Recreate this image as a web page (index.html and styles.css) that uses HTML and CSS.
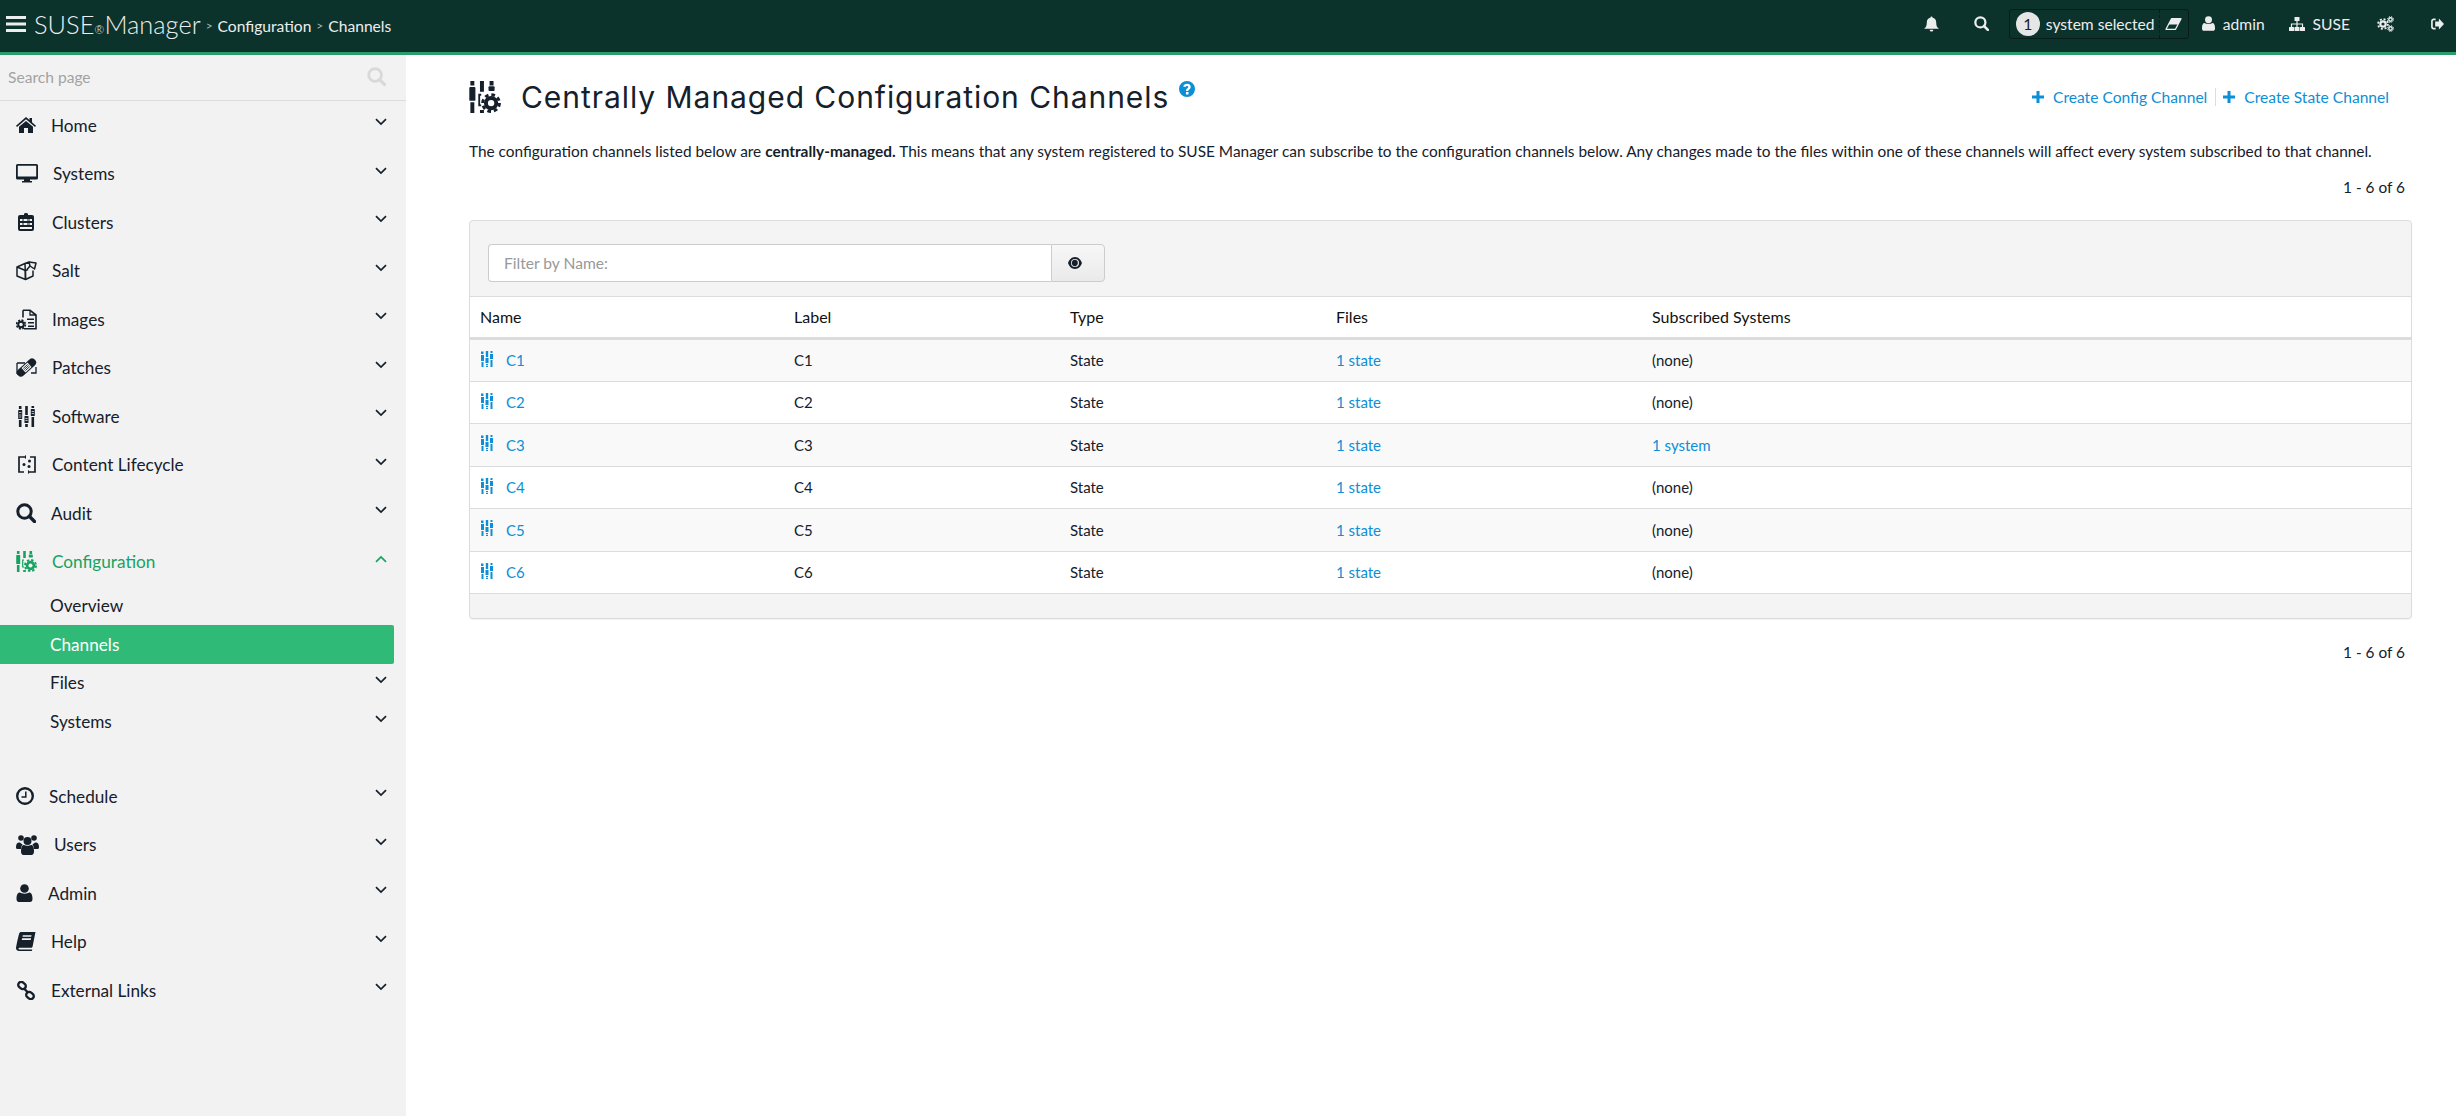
FILE: index.html
```html
<!DOCTYPE html>
<html lang="en">
<head>
    <meta charset="UTF-8">
    <title>Centrally Managed Configuration Channels</title>
    <link rel="stylesheet" href="styles.css">
</head>
<body>
    <!-- Icon sprites -->
    <svg class="sprites" xmlns="http://www.w3.org/2000/svg">
        <symbol id="i-bars" viewBox="0 0 20 16"><rect y="0" width="20" height="3"/><rect y="6.5" width="20" height="3"/><rect y="13" width="20" height="3"/></symbol>
        <symbol id="i-home" viewBox="0 0 20 16"><path d="M10 0 13.5 3V1H16V5.2L20 8.7 19 9.9 10 2.3 1 9.9 0 8.7Z"/><path d="M10 3.9 17 9.8V16H12V11H8V16H3V9.8Z"/></symbol>
        <symbol id="i-desktop" viewBox="0 0 22 19"><path d="M1.5 0H20.5A1.5 1.5 0 0 1 22 1.5V14A1.5 1.5 0 0 1 20.5 15.5H14V17H16V18.500H6V17H8V15.500H1.500A1.500 1.500 0 0 1 0 14V1.500A1.500 1.500 0 0 1 1.500 0ZM1.800 1.800V12.500H20.200V1.800Z" fill-rule="evenodd"/></symbol>
        <symbol id="i-clusters" viewBox="0 0 16 18"><path d="M2 2H6V1A2 1 0 0 1 10 1V2H14A2 2 0 0 1 16 4V16A2 2 0 0 1 14 18H2A2 2 0 0 1 0 16V4A2 2 0 0 1 2 2ZM2 6V8H14V6ZM2 10V12H14V10ZM2 14V16H14V14Z" fill-rule="evenodd"/><rect x="4" y="6.500" width="2" height="1"/><rect x="9" y="6.500" width="3" height="1"/><rect x="4" y="10.500" width="2" height="1"/><rect x="9" y="10.500" width="3" height="1"/></symbol>
        <symbol id="i-salt" viewBox="0 0 21 20"><g fill="none" stroke="currentColor" stroke-width="1.500" stroke-linejoin="round"><path d="M1 6.500 9 3V3L9.500 19 1 15.500Z"/><path d="M9.500 19 17 15.500V10"/><path d="M1 6.500 9.500 10"/><path d="M9.500 10V19"/><path d="M9.500 10 12 9"/><path d="M9 3 13 1.500 14 5.500 11 9"/><path d="M13 1.500 20 2.500 18.500 8.500 14 5.500"/></g></symbol>
        <symbol id="i-images" viewBox="0 0 21 20"><path d="M7 .8H14L20 5.500V19.200H8" fill="none" stroke="currentColor" stroke-width="1.600"/><path d="M7 .8V8" fill="none" stroke="currentColor" stroke-width="1.600"/><path d="M14 .8V5.500H20" fill="none" stroke="currentColor" stroke-width="1.300"/><rect x="11" y="9" width="7" height="1.500"/><rect x="12" y="12.500" width="6" height="1.500"/><rect x="12" y="16" width="6" height="1.500"/><circle cx="5" cy="15" r="2.800" fill="none" stroke="currentColor" stroke-width="2"/><circle cx="5" cy="15" r="4.400" fill="none" stroke="currentColor" stroke-width="1.600" stroke-dasharray="2 1.450"/></symbol>
        <symbol id="i-patches" viewBox="0 0 21 21"><path d="M1 6H9M1 6V17M1 17H4M15 16H20V10" fill="none" stroke="currentColor" stroke-width="1.300"/><g transform="rotate(-42 10.500 10.500)"><rect x="-1" y="6.500" width="23" height="8" rx="4"/><rect x="6.500" y="7.500" width="8" height="6" fill="#f2f2f2"/><path d="M7.500 9H13.500M7.500 10.500H13.500M7.500 12H13.500" stroke="currentColor" stroke-width=".8"/></g></symbol>
        <symbol id="i-sliders" viewBox="0 0 17 21"><path d="M2.200 0V3M2.200 14V21M8.500 0V9M8.500 18V21M14.800 0V2M14.800 11V21" fill="none" stroke="currentColor" stroke-width="2.600"/><rect x=".2" y="4" width="4" height="9" rx=".6"/><rect x="6.500" y="10" width="4" height="7" rx=".6"/><rect x="12.800" y="3" width="4" height="7" rx=".6"/><path d="M1 6.500H3.500M1 9H3.500M1 11H3.500M7.300 12.500H9.700M7.300 14.500H9.700M13.600 5.500H16M13.600 7.500H16" stroke="#f2f2f2" stroke-width=".7"/></symbol>
        <symbol id="i-sliders-sm" viewBox="0 0 12 16"><path d="M0 0.500H2.500V3H0ZM0 4H3V10H0ZM0.500 11H2.500V16H0.500ZM4.800 0H7.200V6H4.800ZM4.500 7H7.500V12H4.500ZM5 13H7V14.200H5ZM5 15H7V16H5ZM9.500 0H11.500V2H9.500ZM9 3H12V8H9ZM9.500 9H11.500V16H9.500Z"/></symbol>
        <symbol id="i-lifecycle" viewBox="0 0 18 19"><path d="M6 2H1V17H6M12 17H17V2H12" fill="none" stroke="currentColor" stroke-width="1.700"/><path d="M8 0V4L5.500 2ZM10 15V19L12.500 17Z"/><circle cx="11.500" cy="6" r="1.500"/><circle cx="6" cy="9.500" r="1.500"/><circle cx="11" cy="11.500" r="1.500"/></symbol>
        <symbol id="i-search" viewBox="0 0 20 20"><circle cx="8.500" cy="8.500" r="6.700" fill="none" stroke="currentColor" stroke-width="3"/><path d="M13.300 13.300 18.500 18.500" stroke="currentColor" stroke-width="3.400" stroke-linecap="round"/></symbol>
        <symbol id="i-config" viewBox="0 0 21 21"><path d="M2.200 0V3M2.200 14V21M8.500 0V7M8.500 19V21M14.800 0V3" fill="none" stroke="currentColor" stroke-width="2.600"/><rect x=".2" y="4" width="4" height="9" rx=".6"/><rect x="12.800" y="3.500" width="4" height="3" rx=".6"/><path d="M8 9H6.700V16H8" fill="none" stroke="currentColor" stroke-width="1.200"/><circle cx="14.500" cy="14.500" r="3.400" fill="none" stroke="currentColor" stroke-width="2.600"/><circle cx="14.500" cy="14.500" r="5.500" fill="none" stroke="currentColor" stroke-width="1.900" stroke-dasharray="2.400 1.920"/></symbol>
        <symbol id="i-clock" viewBox="0 0 18 18"><circle cx="9" cy="9" r="7.800" fill="none" stroke="currentColor" stroke-width="2.400"/><path d="M9.800 4.500V10H5.500" fill="none" stroke="currentColor" stroke-width="1.500"/></symbol>
        <symbol id="i-users" viewBox="0 0 23 20"><circle cx="5" cy="3" r="2.800"/><circle cx="18" cy="3" r="2.800"/><circle cx="11.500" cy="6" r="4"/><path d="M0 12C0 8 2 7 4 7.500 5 8.500 6 9 6.500 9 6 10.500 5 12 5 14H1.500A1.500 1.500 0 0 1 0 12.500ZM23 12C23 8 21 7 19 7.500 18 8.500 17 9 16.500 9 17 10.500 18 12 18 14H21.500A1.500 1.500 0 0 0 23 12.500Z"/><path d="M8 10C9.500 11 13.500 11 15 10 17 10 18 12 18 16.500 18 18.500 17 20 15.500 20H7.500C6 20 5 18.500 5 16.500 5 12 6 10 8 10Z"/></symbol>
        <symbol id="i-user" viewBox="0 0 16 18"><circle cx="8" cy="4.500" r="4.300"/><path d="M3.500 8.500C5 10 11 10 12.500 8.500 15 8.500 16 11 16 15 16 17 15 18 13.500 18H2.500C1 18 0 17 0 15 0 11 1 8.500 3.500 8.500Z"/></symbol>
        <symbol id="i-book" viewBox="0 0 19 18"><path d="M5 0H18.500L15.800 13.500C15.600 14.500 15 15 14 15H4C3 15 2.300 15.500 2.300 16 2.300 16.400 2.700 16.500 3.500 16.500H15.500L15 18H3C1 18 0 16.800 0 15.500 0 14.500 2 5 3 1.500 3.300.5 4 0 5 0ZM6.500 3 6.200 4.500H14.500L14.800 3ZM5.800 6 5.500 7.500H14L14.300 6Z" fill-rule="evenodd"/></symbol>
        <symbol id="i-link" viewBox="0 0 19 19"><g fill="none" stroke="currentColor" stroke-width="2.400"><rect x="1.500" y="1.500" width="8" height="6" rx="3" transform="rotate(40 5.500 4.500)"/><rect x="9.500" y="11.500" width="8" height="6" rx="3" transform="rotate(40 13.500 14.500)"/><path d="M7.500 7.500 11.500 11.500"/></g></symbol>
        <symbol id="i-bell" viewBox="0 0 16 16"><path d="M8 0A1.300 1.300 0 0 1 9.200 1.200C11.500 1.700 13 3.500 13 6 13 10 14 11.500 16 13H0C2 11.500 3 10 3 6 3 3.500 4.500 1.700 6.800 1.200A1.300 1.300 0 0 1 8 0ZM6 14H10A2 2 0 0 1 6 14Z"/></symbol>
        <symbol id="i-eraser" viewBox="0 0 17 12"><path d="M6.500.7H16L10.500 11.300H1Z" fill="none" stroke="currentColor" stroke-width="1.300" stroke-linejoin="round"/><path d="M6.500.7H16L13 6.500H3.500Z"/></symbol>
        <symbol id="i-sitemap" viewBox="0 0 16 14"><rect x="5.500" y="0" width="5" height="4" rx=".5"/><rect x="0" y="10" width="5" height="4" rx=".5"/><rect x="5.500" y="10" width="5" height="4" rx=".5"/><rect x="11" y="10" width="5" height="4" rx=".5"/><path d="M8 4V10M2.500 10V7H13.500V10" fill="none" stroke="currentColor" stroke-width="1.200"/></symbol>
        <symbol id="i-cogs" viewBox="0 0 17 16"><circle cx="6" cy="8" r="2.700" fill="none" stroke="currentColor" stroke-width="2.200"/><circle cx="6" cy="8" r="4.900" fill="none" stroke="currentColor" stroke-width="1.800" stroke-dasharray="2 1.850"/><circle cx="13.500" cy="3.500" r="1.700" fill="none" stroke="currentColor" stroke-width="1.400"/><circle cx="13.500" cy="12.500" r="1.700" fill="none" stroke="currentColor" stroke-width="1.400"/><circle cx="13.500" cy="3.500" r="2.900" fill="none" stroke="currentColor" stroke-width="1" stroke-dasharray="1.300 1"/><circle cx="13.500" cy="12.500" r="2.900" fill="none" stroke="currentColor" stroke-width="1" stroke-dasharray="1.300 1"/></symbol>
        <symbol id="i-signout" viewBox="0 0 14 12"><path d="M5 1H3A2 2 0 0 0 1 3V9A2 2 0 0 0 3 11H5" fill="none" stroke="currentColor" stroke-width="1.800"/><path d="M8.500 0 14 6 8.500 12V8.700H4.500V3.300H8.500Z"/></symbol>
        <symbol id="i-plus" viewBox="0 0 12 12"><path d="M4.500 0H7.500V4.500H12V7.500H7.500V12H4.500V7.500H0V4.500H4.500Z"/></symbol>
        <symbol id="i-eye" viewBox="0 0 14 12"><path d="M7 0C10.500 0 13 3 14 6 13 9 10.500 12 7 12S1 9 0 6C1 3 3.500 0 7 0ZM7 2A4 4 0 1 0 7 10 4 4 0 0 0 7 2Z" fill-rule="evenodd"/><path d="M5 3.200C6 2.500 8 2.500 9 3.500 10.500 5 10 8 8 9 6 9.800 4 8.500 3.800 6.500 3.800 5 4 4 5 3.200Z"/></symbol>
        <symbol id="i-help" viewBox="0 0 16 16"><path d="M8 0A8 8 0 1 1 8 16 8 8 0 0 1 8 0ZM7 11V13.500H9.500V11ZM8 2.800C6 2.800 4.700 3.800 4.300 5.600L6.500 6.100C6.700 5.300 7.200 4.900 8 4.900 8.800 4.900 9.300 5.300 9.300 6 9.300 6.600 8.900 7 8.200 7.500 7.300 8.200 7 8.800 7 10H9.300C9.300 9.300 9.500 9 10.200 8.500 11.100 7.800 11.700 7.100 11.700 5.900 11.700 4 10.200 2.800 8 2.800Z" fill-rule="evenodd"/></symbol>
        <symbol id="i-down" viewBox="0 0 12 8"><path d="M1 1.200 6 6 11 1.200" fill="none" stroke="currentColor" stroke-width="1.700"/></symbol>
        <symbol id="i-up" viewBox="0 0 12 8"><path d="M1 6.800 6 2 11 6.800" fill="none" stroke="currentColor" stroke-width="1.700"/></symbol>
    </svg>

    <!-- Top bar -->
    <header class="topbar">
        <div class="brand">
            <svg class="icon bars"><use href="#i-bars"/></svg>
            <span class="logo">SUSE<small>®</small>Manager</span>
            <span class="crumb-sep">&gt;</span><span class="crumb">Configuration</span>
            <span class="crumb-sep">&gt;</span><span class="crumb">Channels</span>
        </div>
        <div class="top-tools">
            <svg class="icon t-bell"><use href="#i-bell"/></svg>
            <svg class="icon t-search"><use href="#i-search"/></svg>
            <div class="ssm">
                <span class="ssm-count">1</span>
                <span class="ssm-text">system selected</span>
                <span class="ssm-clear"><svg class="icon t-eraser"><use href="#i-eraser"/></svg></span>
            </div>
            <span class="top-item user-item"><svg class="icon t-user"><use href="#i-user"/></svg>admin</span>
            <span class="top-item org-item"><svg class="icon t-sitemap"><use href="#i-sitemap"/></svg>SUSE</span>
            <svg class="icon t-cogs"><use href="#i-cogs"/></svg>
            <svg class="icon t-signout"><use href="#i-signout"/></svg>
        </div>
    </header>

    <div class="layout">
        <!-- Sidebar -->
        <aside class="sidebar">
            <div class="side-search">
                <span>Search page</span>
                <svg class="icon s-search"><use href="#i-search"/></svg>
            </div>
            <nav>
                <a class="nav-item"><svg class="icon n-home"><use href="#i-home"/></svg><span>Home</span><svg class="icon chev"><use href="#i-down"/></svg></a>
                <a class="nav-item"><svg class="icon n-desktop"><use href="#i-desktop"/></svg><span>Systems</span><svg class="icon chev"><use href="#i-down"/></svg></a>
                <a class="nav-item"><svg class="icon n-clusters"><use href="#i-clusters"/></svg><span>Clusters</span><svg class="icon chev"><use href="#i-down"/></svg></a>
                <a class="nav-item"><svg class="icon n-wide"><use href="#i-salt"/></svg><span>Salt</span><svg class="icon chev"><use href="#i-down"/></svg></a>
                <a class="nav-item"><svg class="icon n-wide"><use href="#i-images"/></svg><span>Images</span><svg class="icon chev"><use href="#i-down"/></svg></a>
                <a class="nav-item"><svg class="icon n-wide"><use href="#i-patches"/></svg><span>Patches</span><svg class="icon chev"><use href="#i-down"/></svg></a>
                <a class="nav-item"><svg class="icon n-sliders"><use href="#i-sliders"/></svg><span>Software</span><svg class="icon chev"><use href="#i-down"/></svg></a>
                <a class="nav-item"><svg class="icon n-lifecycle"><use href="#i-lifecycle"/></svg><span>Content Lifecycle</span><svg class="icon chev"><use href="#i-down"/></svg></a>
                <a class="nav-item"><svg class="icon n-audit"><use href="#i-search"/></svg><span>Audit</span><svg class="icon chev"><use href="#i-down"/></svg></a>
                <a class="nav-item open"><svg class="icon n-wide"><use href="#i-config"/></svg><span>Configuration</span><svg class="icon chev"><use href="#i-up"/></svg></a>
                <a class="sub-item">Overview</a>
                <a class="sub-item active">Channels</a>
                <a class="sub-item">Files<svg class="icon chev"><use href="#i-down"/></svg></a>
                <a class="sub-item">Systems<svg class="icon chev"><use href="#i-down"/></svg></a>
                <div class="nav-gap"></div>
                <a class="nav-item"><svg class="icon n-clock"><use href="#i-clock"/></svg><span>Schedule</span><svg class="icon chev"><use href="#i-down"/></svg></a>
                <a class="nav-item"><svg class="icon n-users"><use href="#i-users"/></svg><span>Users</span><svg class="icon chev"><use href="#i-down"/></svg></a>
                <a class="nav-item"><svg class="icon n-user"><use href="#i-user"/></svg><span>Admin</span><svg class="icon chev"><use href="#i-down"/></svg></a>
                <a class="nav-item"><svg class="icon n-book"><use href="#i-book"/></svg><span>Help</span><svg class="icon chev"><use href="#i-down"/></svg></a>
                <a class="nav-item"><svg class="icon n-book"><use href="#i-link"/></svg><span>External Links</span><svg class="icon chev"><use href="#i-down"/></svg></a>
            </nav>
        </aside>

        <!-- Main content -->
        <main class="content">
            <div class="title-row">
                <svg class="icon title-icon"><use href="#i-config"/></svg>
                <h1>Centrally Managed Configuration Channels</h1>
                <svg class="icon help-icon"><use href="#i-help"/></svg>
                <div class="actions">
                    <a class="action"><svg class="icon plus"><use href="#i-plus"/></svg>Create Config Channel</a>
                    <a class="action second"><svg class="icon plus"><use href="#i-plus"/></svg>Create State Channel</a>
                </div>
            </div>

            <p class="intro">The configuration channels listed below are <b>centrally-managed.</b> This means that any system registered to SUSE Manager can subscribe to the configuration channels below. Any changes made to the files within one of these channels will affect every system subscribed to that channel.</p>
            <div class="pager first">1 - 6 of 6</div>

            <div class="panel">
                <div class="panel-head">
                    <div class="filter">
                        <div class="filter-input">Filter by Name:</div>
                        <div class="filter-btn"><svg class="icon eye"><use href="#i-eye"/></svg></div>
                    </div>
                </div>
                <table>
                    <colgroup><col class="c-name"><col class="c-label"><col class="c-type"><col class="c-files"><col></colgroup>
                    <thead>
                        <tr><th>Name</th><th>Label</th><th>Type</th><th>Files</th><th>Subscribed Systems</th></tr>
                    </thead>
                    <tbody>
                        <tr><td><a class="row-link"><svg class="icon row-icon"><use href="#i-sliders-sm"/></svg>C1</a></td><td>C1</td><td>State</td><td><a>1 state</a></td><td>(none)</td></tr>
                        <tr><td><a class="row-link"><svg class="icon row-icon"><use href="#i-sliders-sm"/></svg>C2</a></td><td>C2</td><td>State</td><td><a>1 state</a></td><td>(none)</td></tr>
                        <tr><td><a class="row-link"><svg class="icon row-icon"><use href="#i-sliders-sm"/></svg>C3</a></td><td>C3</td><td>State</td><td><a>1 state</a></td><td><a>1 system</a></td></tr>
                        <tr><td><a class="row-link"><svg class="icon row-icon"><use href="#i-sliders-sm"/></svg>C4</a></td><td>C4</td><td>State</td><td><a>1 state</a></td><td>(none)</td></tr>
                        <tr><td><a class="row-link"><svg class="icon row-icon"><use href="#i-sliders-sm"/></svg>C5</a></td><td>C5</td><td>State</td><td><a>1 state</a></td><td>(none)</td></tr>
                        <tr><td><a class="row-link"><svg class="icon row-icon"><use href="#i-sliders-sm"/></svg>C6</a></td><td>C6</td><td>State</td><td><a>1 state</a></td><td>(none)</td></tr>
                    </tbody>
                </table>
                <div class="panel-foot"></div>
            </div>
            <div class="pager last">1 - 6 of 6</div>
        </main>
    </div>
</body>
</html>
```

FILE: styles.css
```css
/* General */
* {
    box-sizing: border-box;
}

body {
    margin: 0;
    height: 100vh;
    overflow: hidden;
    display: flex;
    flex-direction: column;
    font-family: 'Lato', sans-serif;
    font-size: 15.4px;
    color: #15202b;
    background: #fff;
}

a {
    color: #0c8fd6;
}

.sprites {
    display: none;
}

.icon {
    display: block;
    flex: none;
    fill: currentColor;
}

/* Top bar */
.topbar {
    height: 55px;
    flex: none;
    display: flex;
    justify-content: space-between;
    padding-bottom: 5px;
    background: #0c322c;
    border-bottom: 3px solid #2a9d6b;
    color: #eceeee;
}

.brand {
    display: flex;
    align-items: center;
    padding-left: 6px;
}

.bars {
    width: 20px;
    height: 16px;
    margin-right: 8px;
}

.logo {
    font-size: 25.4px;
    font-weight: 300;
    margin-right: 5px;
}

.logo small {
    font-size: 12px;
}

.crumb {
    font-size: 15.6px;
    margin-top: 4px;
}

.crumb-sep {
    font-size: 12px;
    color: #a9b8b4;
    margin: 4px 5px 0 0;
}

.crumb + .crumb-sep {
    margin-left: 5px;
}

.top-tools {
    display: flex;
    align-items: center;
    font-size: 15.6px;
}

.t-bell {
    width: 15px;
    height: 16px;
    margin-right: 35px;
}

.t-search {
    width: 15px;
    height: 15px;
    margin-right: 20px;
}

.ssm {
    width: 180px;
    height: 30px;
    display: flex;
    align-items: center;
    border: 1px solid #081c19;
    border-radius: 3px;
    padding-left: 6px;
}

.ssm-count {
    width: 24px;
    height: 24px;
    border-radius: 50%;
    background: #e6e6e6;
    color: #15202b;
    text-align: center;
    line-height: 24px;
    margin-right: 6px;
}

.ssm-text {
    width: 113px;
    white-space: nowrap;
}

.ssm-clear {
    height: 100%;
    flex: 1;
    display: flex;
    align-items: center;
    justify-content: center;
    border-left: 1px dashed #081c19;
}

.t-eraser {
    width: 17px;
    height: 12px;
}

.top-item {
    display: flex;
    align-items: center;
}

.user-item {
    margin-left: 13px;
}

.t-user {
    width: 13px;
    height: 15px;
    margin-right: 8px;
}

.org-item {
    margin-left: 24px;
}

.t-sitemap {
    width: 16px;
    height: 14px;
    margin-right: 8px;
}

.t-cogs {
    width: 17px;
    height: 16px;
    margin: 0 37px 0 27px;
}

.t-signout {
    width: 13px;
    height: 12px;
    margin-right: 12px;
}

/* Sidebar */
.layout {
    flex: 1;
    display: flex;
    min-height: 0;
}

.sidebar {
    width: 406px;
    flex: none;
    background: #f2f2f2;
}

.side-search {
    height: 46px;
    display: flex;
    align-items: center;
    justify-content: space-between;
    padding: 0 20px 2px 8px;
    border-bottom: 1px solid #dcdcdc;
    color: #a3a3a3;
    font-size: 15.6px;
}

.s-search {
    width: 19px;
    height: 19px;
    color: #d9d9d9;
}

.nav-item,
.sub-item {
    display: flex;
    align-items: center;
    color: #15202b;
    font-size: 17.2px;
    width: 394px;
}

.nav-item {
    height: 48.5px;
    padding: 0 7px 0 16px;
}

.nav-item .icon:first-child {
    margin-right: 15px;
}

.nav-item.open {
    color: #16a35f;
}

.sub-item {
    height: 38.8px;
    padding: 0 7px 0 50px;
}

.sub-item.active {
    background: #30ba78;
    color: #fff;
    border-radius: 0 2px 2px 0;
}

.nav-gap {
    height: 31px;
}

.chev {
    width: 12px;
    height: 8px;
    margin: -6px 0 0 auto;
}

.n-home { width: 20px; height: 16px; }
.n-desktop { width: 22px; height: 19px; }
.n-clusters { width: 16px; height: 18px; margin-left: 2px; margin-right: 18px !important; }
.n-wide { width: 21px; height: 21px; }
.n-sliders { width: 17px; height: 21px; margin-left: 2px; margin-right: 17px !important; }
.n-lifecycle { width: 18px; height: 19px; margin-left: 2px; margin-right: 16px !important; }
.n-audit { width: 20px; height: 20px; }
.n-clock { width: 18px; height: 18px; }
.n-users { width: 23px; height: 20px; }
.n-user { width: 17px; height: 18px; }
.n-book { width: 20px; height: 19px; }

/* Main content */
.content {
    flex: 1;
    min-width: 0;
    padding: 20px 44px 0 63px;
}

.title-row {
    height: 44px;
    display: flex;
    align-items: center;
}

.title-icon {
    width: 32px;
    height: 32px;
    margin-right: 20px;
}

h1 {
    margin: 0;
    font-family: 'Inter', sans-serif;
    font-size: 30px;
    font-weight: 400;
    white-space: nowrap;
    letter-spacing: 0.95px;
}

.help-icon {
    width: 16px;
    height: 16px;
    margin: -16px 0 0 10px;
    color: #0c8fd6;
}

.actions {
    margin-left: auto;
    padding-right: 23px;
    display: flex;
    align-items: center;
}

.action {
    display: flex;
    align-items: center;
    font-size: 15.6px;
}

.action.second {
    margin-left: 8px;
    padding-left: 7px;
    border-left: 1px solid #dcdcdc;
}

.plus {
    width: 12px;
    height: 12px;
    margin-right: 9px;
}

.intro {
    margin: 22px 0 0;
    line-height: 20px;
    white-space: nowrap;
}

.intro b {
    font-weight: 700;
}

.pager {
    line-height: 20px;
    text-align: right;
    padding-right: 7px;
}

.pager.first {
    margin-top: 16px;
}

.pager.last {
    margin-top: 23px;
}

/* Panel and table */
.panel {
    margin-top: 23px;
    border: 1px solid #dcdcdc;
    border-radius: 4px;
    background: #f4f4f4;
    box-shadow: 0 1px 1px rgba(0, 0, 0, 0.05);
    overflow: hidden;
}

.panel-head {
    height: 75px;
    padding: 23px 18px 0;
}

.filter {
    display: flex;
    width: 617px;
    height: 38px;
}

.filter-input {
    flex: 1;
    padding-left: 15px;
    line-height: 36px;
    color: #999;
    background: #fff;
    border: 1px solid #ccc;
    border-right: none;
    border-radius: 4px 0 0 4px;
    font-size: 15.6px;
}

.filter-btn {
    width: 54px;
    display: flex;
    align-items: center;
    justify-content: center;
    padding-right: 6px;
    background: linear-gradient(#f7f7f7, #eaeaea);
    border: 1px solid #ccc;
    border-radius: 0 4px 4px 0;
}

.eye {
    width: 14px;
    height: 12px;
}

table {
    width: 100%;
    table-layout: fixed;
    border-collapse: collapse;
    background: #fff;
    border-top: 1px solid #dcdcdc;
}

.c-name { width: 314px; }
.c-label { width: 276px; }
.c-type { width: 266px; }
.c-files { width: 316px; }

th {
    height: 42px;
    padding: 0 10px 2px;
    text-align: left;
    font-weight: 400;
    font-size: 16px;
    border-bottom: 3px solid #dcdcdc;
    color: #111;
}

td {
    height: 42.5px;
    padding: 0 10px;
    font-size: 15px;
    border-bottom: 1px solid #dcdcdc;
}

tbody tr:nth-child(odd) {
    background: #f9f9f9;
}

.row-link {
    display: flex;
    align-items: center;
}

.row-icon {
    width: 12px;
    height: 16px;
    margin: -3px 13px 0 1px;
}

.panel-foot {
    height: 24px;
}
```
